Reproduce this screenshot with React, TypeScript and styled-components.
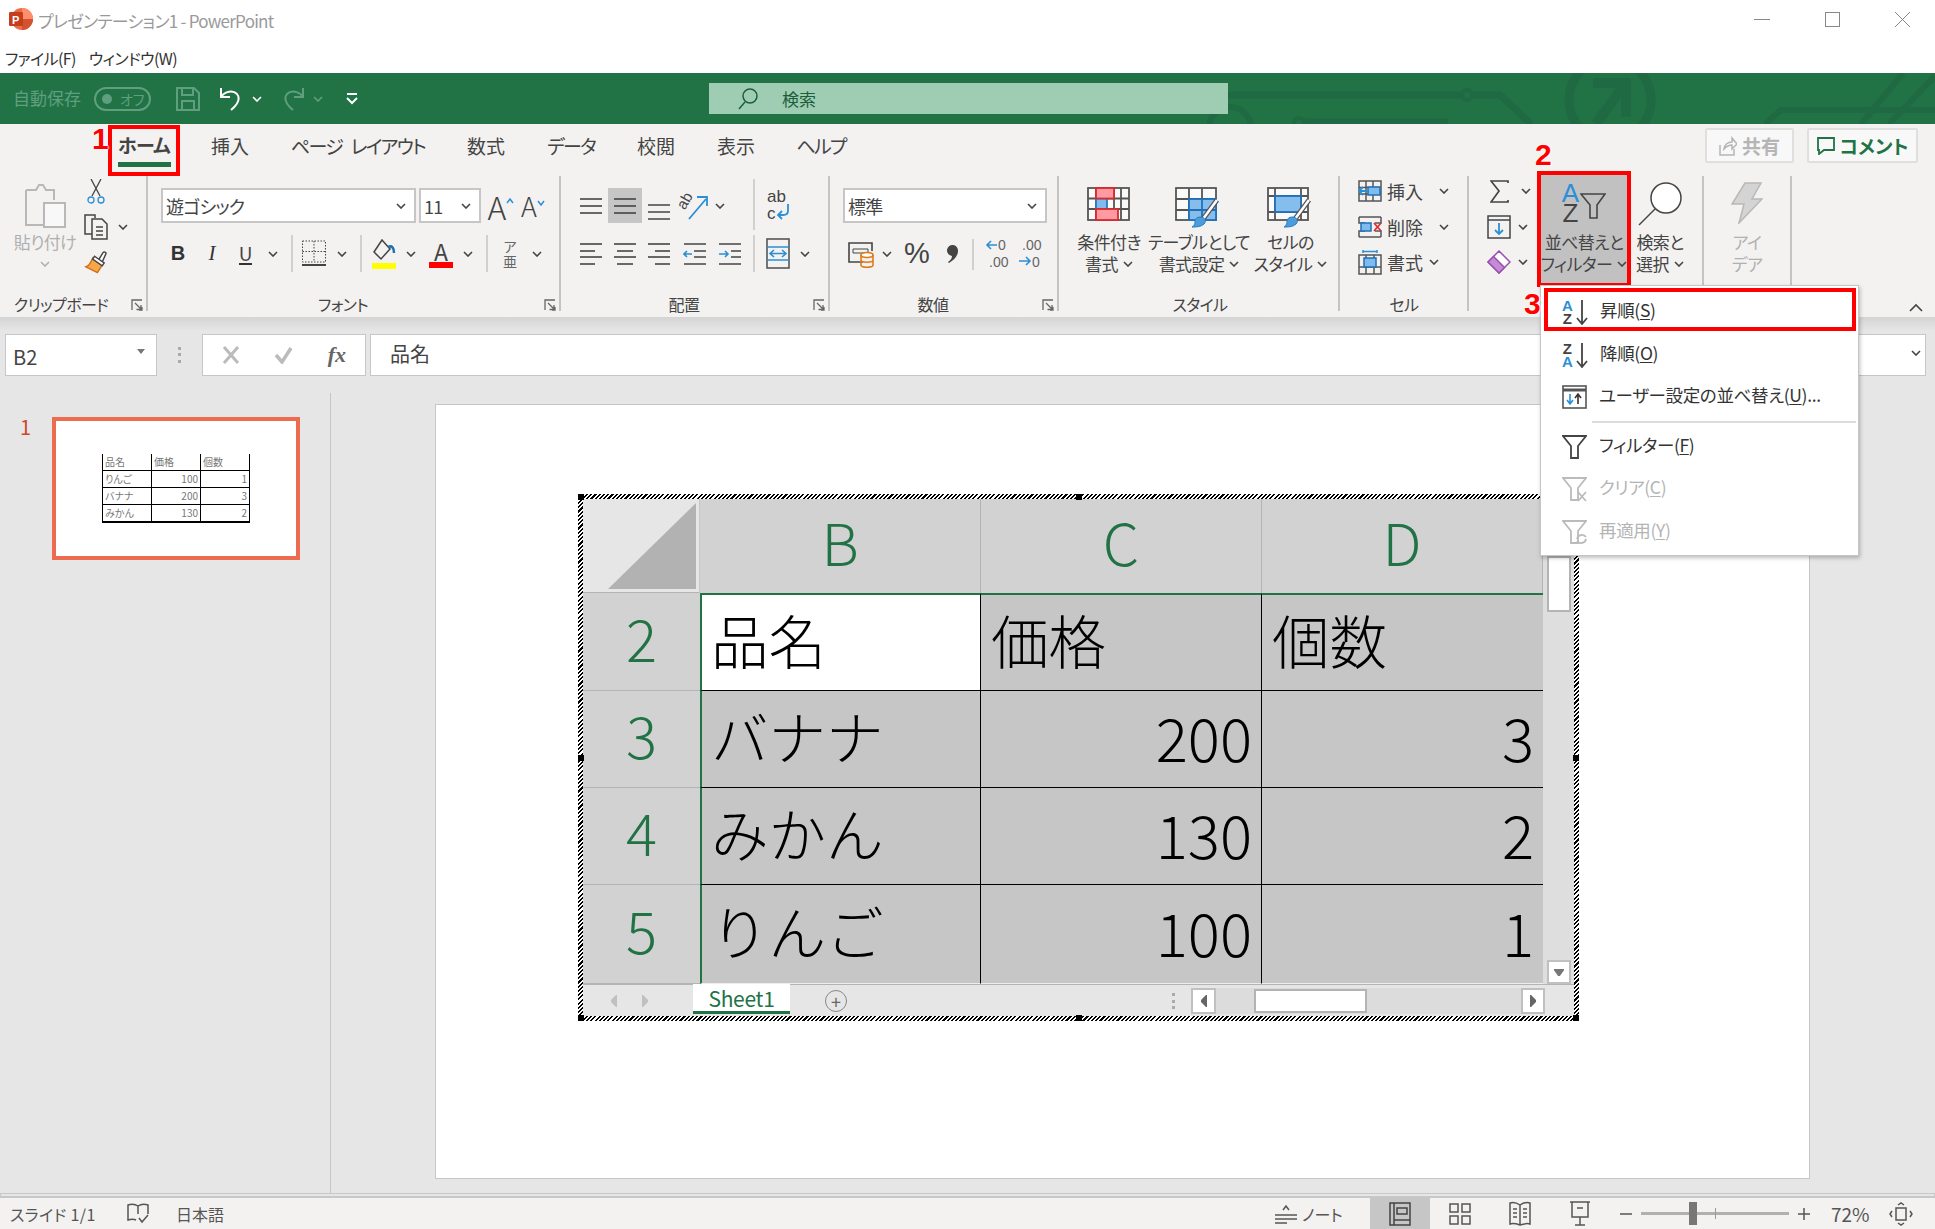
import React from 'react';
import styled, { createGlobalStyle } from 'styled-components';

const GlobalStyle = createGlobalStyle`
  html, body { margin: 0; padding: 0; background: #e6e6e6; }
  body {
    font-family: "Noto Sans CJK JP", "Liberation Sans", sans-serif;
    font-feature-settings: "palt";
    color: #444;
  }
  * { box-sizing: border-box; }
`;

const GREEN = '#217346';
const INK = '#444444';
const BLUE = '#2b8fd6';

const Window = styled.div`
  position: relative;
  width: 1935px;
  height: 1229px;
  overflow: hidden;
  display: flex;
  flex-direction: column;
  background: #e6e6e6;
`;

const TitleBar = styled.div`
  height: 38px;
  background: #fff;
  display: flex;
  align-items: center;
  padding-left: 9px;
`;

const TitleText = styled.span`
  margin-left: 5px;
  padding-top: 2px;
  font-size: 17px;
  letter-spacing: -0.75px;
  color: #9a9a9a;
  white-space: nowrap;
`;

const WinControls = styled.div`
  margin-left: auto;
  display: flex;
  align-items: center;
  padding-right: 25px;
  gap: 55px;
`;

const MenuBar = styled.div`
  height: 35px;
  background: #fff;
  display: flex;
  align-items: center;
  padding: 5px 0 0 5px;
  gap: 13px;
  font-size: 16px;
  letter-spacing: -0.6px;
  color: #333;
`;

const QuickBar = styled.div`
  position: relative;
  height: 51px;
  background: ${GREEN};
  display: flex;
  align-items: center;
  padding-left: 13px;
`;

const Pattern = styled.svg`
  position: absolute;
  left: 0;
  top: 0;
`;

const AutoSave = styled.span`
  font-size: 17px;
  padding-bottom: 3px;
  color: #5f9f7e;
  width: 71px;
  white-space: nowrap;
`;

const Toggle = styled.div`
  margin-left: 10px;
  width: 57px;
  height: 24px;
  border: 2px solid #5f9f7e;
  border-radius: 12px;
  display: flex;
  align-items: center;
  padding-left: 6px;
  gap: 8px;
  font-size: 14px;
  color: #5f9f7e;
  &::before {
    content: '';
    width: 10px;
    height: 10px;
    border-radius: 50%;
    background: #5f9f7e;
  }
`;

const Slot = styled.div<{ $w: number; $ml?: number }>`
  flex: none;
  width: ${(p) => p.$w}px;
  margin-left: ${(p) => p.$ml ?? 0}px;
  display: flex;
  justify-content: center;
  align-items: center;
`;

const SearchBox = styled.div`
  position: relative;
  margin-left: 351px;
  width: 519px;
  height: 31px;
  background: #9fcdb4;
  display: flex;
  align-items: center;
  padding-left: 29px;
  gap: 24px;
  font-size: 17px;
  color: #1d5f3b;
`;

const Ribbon = styled.div`
  height: 193px;
  background: #f3f2f1;
  display: flex;
  flex-direction: column;
  flex: none;
`;

const TabRow = styled.div`
  height: 52px;
  display: flex;
  padding-left: 108px;
`;

const HomeTab = styled.div`
  width: 72px;
  height: 51px;
  margin-top: 1px;
  border: 4px solid #f00;
  margin-right: 10px;
  display: flex;
  flex-direction: column;
  align-items: center;
  font-size: 19px;
  font-weight: 700;
  letter-spacing: -0.8px;
  color: #444;
  line-height: 32px;
  &::after {
    content: '';
    width: 53px;
    height: 5px;
    margin-top: 1px;
    background: ${GREEN};
  }
`;

const Tab = styled.div<{ $w: number; $ls?: number }>`
  width: ${(p) => p.$w}px;
  height: 42px;
  display: flex;
  justify-content: center;
  align-items: center;
  font-size: 19px;
  letter-spacing: ${(p) => p.$ls ?? 0}px;
  word-spacing: 6px;
  color: #444;
  white-space: nowrap;
`;

const ShareWrap = styled.div`
  margin-left: auto;
  margin-right: 17px;
  margin-top: 4px;
  display: flex;
  gap: 13px;
  height: 35px;
`;

const ShareButton = styled.div<{ $w: number; $off?: boolean }>`
  width: ${(p) => p.$w}px;
  border: 2px solid #e1dfdd;
  border-radius: 2px;
  background: #f8f8f8;
  display: flex;
  align-items: center;
  justify-content: center;
  gap: 5px;
  font-size: 19px;
  font-weight: 700;
  color: ${(p) => (p.$off ? '#b5b5b5' : GREEN)};
`;

const GroupRow = styled.div`
  display: flex;
  height: 141px;
`;

const Group = styled.div<{ $w: number }>`
  position: relative;
  width: ${(p) => p.$w}px;
  flex: none;
  &::after {
    content: '';
    position: absolute;
    right: 0;
    top: 0;
    width: 2px;
    height: 135px;
    background: #c4c4c4;
  }
`;

const GroupLabel = styled.div<{ $cx: number }>`
  position: absolute;
  top: 115px;
  left: ${(p) => p.$cx}px;
  transform: translateX(-50%);
  font-size: 16px;
  line-height: 26px;
  letter-spacing: -0.6px;
  color: #444;
  white-space: nowrap;
`;

const Launcher = styled.div`
  position: absolute;
  right: 5px;
  top: 123px;
  line-height: 0;
`;

const Columns = styled.div<{ $pl?: number }>`
  display: flex;
  padding-left: ${(p) => p.$pl ?? 0}px;
`;

const Stack = styled.div<{ $pl?: number }>`
  display: flex;
  flex-direction: column;
  padding: 12px 0 0 ${(p) => p.$pl ?? 0}px;
  gap: 13px;
`;

const ToolRow = styled.div<{ $pl?: number }>`
  display: flex;
  align-items: center;
  height: 35px;
  padding-left: ${(p) => p.$pl ?? 0}px;
`;

const Compact = styled.div<{ $w: number; $ml?: number }>`
  width: ${(p) => p.$w}px;
  margin-left: ${(p) => p.$ml ?? 0}px;
  flex: none;
  display: flex;
  flex-direction: column;
  gap: 5.5px;
`;

const CompactRow = styled.div<{ $pl?: number }>`
  display: flex;
  align-items: center;
  height: 30px;
  padding-left: ${(p) => p.$pl ?? 0}px;
  font-size: 18px;
  color: #444;
`;

const CompactLabel = styled.span`
  width: 35px;
  margin-left: 5px;
  white-space: nowrap;
`;

const Combo = styled.div<{ $w: number; $ml?: number }>`
  width: ${(p) => p.$w}px;
  margin-left: ${(p) => p.$ml ?? 0}px;
  height: 35px;
  flex: none;
  background: #fff;
  border: 2px solid #c6c6c6;
  display: flex;
  align-items: center;
  justify-content: space-between;
  padding: 0 8px 0 3px;
  font-size: 18px;
  letter-spacing: -0.7px;
  color: #444;
`;

const Divider = styled.div<{ $h: number; $mt?: number }>`
  width: 2px;
  height: ${(p) => p.$h}px;
  margin-top: ${(p) => p.$mt ?? 0}px;
  background: #d0d0d0;
  align-self: flex-start;
`;

const Hi = styled.div`
  width: 34px;
  height: 35px;
  background: #c6c6c6;
  display: flex;
  justify-content: center;
  align-items: center;
`;

const BigButton = styled.div<{ $w: number; $pt: number; $off?: boolean }>`
  width: ${(p) => p.$w}px;
  flex: none;
  display: flex;
  flex-direction: column;
  align-items: center;
  font-size: 17px;
  line-height: 22px;
  color: ${(p) => (p.$off ? '#b0b0b0' : '#444')};
  white-space: nowrap;
  & > :first-child {
    height: 55px;
    padding-top: ${(p) => p.$pt}px;
    line-height: 0;
  }
`;

const IconBox = styled.div``;

const LabelLine = styled.div`
  display: flex;
  align-items: center;
  gap: 5px;
  min-height: 22px;
  letter-spacing: -0.6px;
`;

const SortButton = styled.div`
  width: 94px;
  height: 116px;
  margin-top: -5px;
  flex: none;
  border: 4px solid #f00;
  background: #c1c1c1;
  display: flex;
  flex-direction: column;
  align-items: center;
  font-size: 17px;
  line-height: 22px;
  color: #444;
  white-space: nowrap;
`;

const SortIconBox = styled.div`
  height: 56px;
  padding-top: 8px;
  display: flex;
  align-items: flex-start;
  gap: 1px;
`;

const SortLetters = styled.div<{ $size: number; $lh: number }>`
  display: flex;
  flex-direction: column;
  align-items: center;
  font-family: "Liberation Sans", sans-serif;
  font-size: ${(p) => p.$size}px;
  line-height: ${(p) => p.$lh}px;
  letter-spacing: 0;
`;

const SortLetter = styled.span<{ $c: string; $b?: boolean }>`
  display: block;
  color: ${(p) => p.$c};
  font-weight: ${(p) => (p.$b ? 700 : 400)};
`;

const GlyphA = styled.span<{ $size: number }>`
  font-size: ${(p) => p.$size}px;
  line-height: 1;
  color: #444;
  font-weight: 300;
`;

const Caret = styled.span`
  align-self: flex-start;
  margin-top: 7px;
  line-height: 0;
`;

const Bold = styled.span`
  font-family: "Liberation Sans", sans-serif;
  font-weight: 700;
  font-size: 20px;
  color: #333;
`;

const Ital = styled.span`
  font-family: "Liberation Serif", serif;
  font-style: italic;
  font-size: 21px;
  color: #333;
`;

const Under = styled.span`
  font-size: 19px;
  line-height: 21px;
  border-bottom: 2px solid #333;
  color: #444;
`;

const ColorA = styled.div<{ $bar: string }>`
  width: 24px;
  display: flex;
  flex-direction: column;
  align-items: center;
  font-size: 23px;
  line-height: 22px;
  color: #444;
  &::after {
    content: '';
    width: 24px;
    height: 6px;
    background: ${(p) => p.$bar};
  }
`;

const Furi = styled.div`
  display: flex;
  flex-direction: column;
  align-items: center;
  font-size: 14px;
  line-height: 15px;
  color: #666;
  span { display: block; height: 15px; }
`;

const Percent = styled.span`
  font-family: "Liberation Sans", sans-serif;
  font-size: 29px;
  color: #444;
`;

const RibbonShade = styled.div`
  height: 14px;
  flex: none;
  background: linear-gradient(#d4d4d4, #e6e6e6);
`;

const FormulaRow = styled.div`
  height: 45px;
  flex: none;
  padding: 3px 9px 0 5px;
  display: flex;
  align-items: stretch;
`;

const NameBox = styled.div`
  width: 152px;
  background: #fff;
  border: 1px solid #c6c6c6;
  display: flex;
  align-items: center;
  justify-content: space-between;
  padding: 3px 11px 0 7px;
  font-size: 20px;
  color: #444;
  &::after {
    content: '';
    border: 4px solid transparent;
    border-top: 5px solid #777;
    margin-top: -6px;
  }
`;

const FxBox = styled.div`
  width: 164px;
  background: #fff;
  border: 1px solid #c6c6c6;
  display: flex;
  align-items: center;
  justify-content: space-between;
  padding: 0 19px;
`;

const FormulaInput = styled.div`
  flex: 1;
  margin-left: 4px;
  background: #fff;
  border: 1px solid #c6c6c6;
  display: flex;
  align-items: center;
  justify-content: space-between;
  padding: 0 4px 4px 19px;
  font-size: 20px;
  color: #444;
`;

const FxText = styled.span`
  font-family: "Liberation Serif", serif;
  font-style: italic;
  font-weight: 700;
  font-size: 22px;
  color: #666;
`;

const Main = styled.div`
  flex: 1;
  display: flex;
  min-height: 0;
`;

const SidePanel = styled.div`
  width: 331px;
  flex: none;
  margin-top: 17px;
  border-right: 1px solid #c6c6c6;
  padding: 24px 0 0 20px;
  display: flex;
  align-items: flex-start;
`;

const SlideNum = styled.div`
  width: 32px;
  font-size: 20px;
  line-height: 20px;
  color: #d24726;
`;

const Thumb = styled.div`
  width: 248px;
  height: 143px;
  background: #fff;
  border: 4px solid #ed6c4f;
  display: flex;
  align-items: center;
  justify-content: center;
`;

const MiniTable = styled.div`
  width: 148px;
  display: grid;
  grid-template-columns: 49px 49px 49px;
  border-left: 1px solid #000;
  border-bottom: 1px solid #000;
`;

const MiniCell = styled.div<{ $num?: boolean }>`
  height: 17px;
  border-right: 1px solid #000;
  border-bottom: 1px solid #000;
  font-size: 10px;
  line-height: 16px;
  padding: 0 2px;
  color: #777;
  text-align: ${(p) => (p.$num ? 'right' : 'left')};
`;

const SlideArea = styled.div`
  flex: 1;
  padding: 28px 0 0 104px;
`;

const Slide = styled.div`
  position: relative;
  width: 1375px;
  height: 775px;
  background: #fff;
  border: 1px solid #c6c6c6;
  padding: 89px 0 0 142px;
`;

const Embedded = styled.div`
  position: relative;
  width: 1001px;
  height: 527px;
  padding: 5px;
  background: repeating-linear-gradient(135deg, #000 0 1.5px, #fff 1.5px 3px);
`;

const Handle = styled.i<{ $x: string; $y: string }>`
  position: absolute;
  left: ${(p) => p.$x};
  top: ${(p) => p.$y};
  width: 6px;
  height: 6px;
  margin: -3px 0 0 -3px;
  background: #000;
`;

const Sheet = styled.div`
  height: 517px;
  display: flex;
  flex-direction: column;
  background: #e6e6e6;
`;

const SheetGrid = styled.div`
  height: 485px;
  display: grid;
  grid-template-columns: 117px 281px 281px 281px 31px;
  grid-template-rows: 94px 98px 97px 97px 99px;
`;

const Corner = styled.div`
  background: #e6e6e6;
  display: flex;
  justify-content: flex-end;
  align-items: flex-end;
  padding: 0 3px 3px 0;
  border-bottom: 1px solid #b4b4b4;
  border-right: 1px solid #c6c6c6;
  &::after {
    content: '';
    width: 88px;
    height: 86px;
    background: #b2b2b2;
    clip-path: polygon(100% 0, 100% 100%, 0 100%);
  }
`;

const ColHead = styled.div`
  background: #d2d2d2;
  border-right: 1px solid #b4b4b4;
  display: flex;
  justify-content: center;
  align-items: center;
  padding-bottom: 10px;
  font-size: 58px;
  font-weight: 300;
  color: ${GREEN};
`;

const RowHead = styled.div`
  background: #d2d2d2;
  border-bottom: 1px solid #b4b4b4;
  display: flex;
  justify-content: center;
  align-items: center;
  padding-bottom: 10px;
  font-size: 58px;
  font-weight: 300;
  color: ${GREEN};
`;

const Cell = styled.div<{ $sel?: boolean; $num?: boolean; $left?: boolean; $top?: boolean; $last?: boolean; $end?: boolean }>`
  background: ${(p) => (p.$sel ? '#fff' : '#c6c6c6')};
  border-bottom: 1px solid ${(p) => (p.$end ? '#ededed' : '#000')};
  border-right: ${(p) => (p.$last ? 'none' : '1px solid #000')};
  border-left: ${(p) => (p.$left ? `2px solid ${GREEN}` : 'none')};
  border-top: ${(p) => (p.$top ? `2px solid ${GREEN}` : 'none')};
  display: flex;
  align-items: center;
  justify-content: ${(p) => (p.$num ? 'flex-end' : 'flex-start')};
  padding: 0 ${(p) => (p.$num ? 9 : 0)}px 8px ${(p) => (p.$num ? 0 : p.$left ? 9 : 10)}px;
  font-size: ${(p) => (p.$num ? 60 : 57.5)}px;
  font-weight: 300;
  font-feature-settings: normal;
  color: #000;
  white-space: nowrap;
`;

const VScroll = styled.div`
  grid-column: 5;
  grid-row: 1 / 6;
  background: #dedede;
  display: flex;
  flex-direction: column;
  align-items: center;
  padding: 57px 0 0;
`;

const ScrollThumb = styled.div`
  width: 24px;
  height: 56px;
  background: #fff;
  border: 2px solid #b4b4b4;
`;

const ScrollBtn = styled.div<{ $w: number; $h: number; $auto?: boolean }>`
  width: ${(p) => p.$w}px;
  height: ${(p) => p.$h}px;
  flex: none;
  margin-top: ${(p) => (p.$auto ? 'auto' : 0)};
  background: #fff;
  border: 2px solid #c0c0c0;
  display: flex;
  align-items: center;
  justify-content: center;
`;

const SheetTabs = styled.div`
  height: 32px;
  display: flex;
  align-items: center;
  border-top: 1px solid #b4b4b4;
  padding-left: 15px;
`;

const SheetTab = styled.div`
  width: 97px;
  height: 30px;
  margin-top: -3px;
  flex: none;
  background: #fff;
  border-bottom: 3px solid ${GREEN};
  display: flex;
  align-items: center;
  justify-content: center;
  font-size: 21px;
  letter-spacing: -0.3px;
  color: ${GREEN};
`;

const PlusCircle = styled.div`
  width: 22px;
  height: 22px;
  border: 1px solid #888;
  border-radius: 50%;
  display: flex;
  align-items: center;
  justify-content: center;
  font-size: 18px;
  line-height: 1;
  color: #666;
`;

const Dots = styled.div`
  width: 3px;
  height: 16px;
  background: repeating-linear-gradient(#aaa 0 3px, transparent 3px 6.5px);
`;

const HScroll = styled.div`
  width: 354px;
  margin-left: 10px;
  height: 26px;
  flex: none;
  background: #dcdcdc;
  display: flex;
  align-items: center;
`;

const HTrack = styled.div`
  flex: 1;
  padding-left: 38px;
`;

const HThumb = styled.div`
  width: 113px;
  height: 24px;
  background: #fff;
  border: 2px solid #b4b4b4;
`;

const StatusBar = styled.div`
  height: 33px;
  flex: none;
  background: #f3f2f1;
  border-top: 2px solid #c8c8c8;
  box-shadow: 0 -3px 0 -1px #e6e6e6, 0 -3px 0 0 #c8c8c8;
  display: flex;
  align-items: center;
  padding-left: 10px;
  font-size: 16px;
  color: #555;
`;

const StatusText = styled.span<{ $w: number; $ml?: number; $fs?: number; $ls?: number }>`
  flex: none;
  width: ${(p) => p.$w}px;
  margin-left: ${(p) => p.$ml ?? 0}px;
  font-size: ${(p) => p.$fs ?? 16}px;
  letter-spacing: ${(p) => p.$ls ?? 0}px;
  white-space: nowrap;
`;

const StatusRight = styled.div`
  margin-left: auto;
  padding-right: 22px;
  height: 100%;
  display: flex;
  align-items: center;
`;

const ViewBtn = styled.div<{ $w: number; $on?: boolean }>`
  width: ${(p) => p.$w}px;
  height: 100%;
  flex: none;
  background: ${(p) => (p.$on ? '#c6c6c6' : 'transparent')};
  display: flex;
  align-items: center;
  justify-content: center;
`;

const ZoomSlider = styled.div`
  position: relative;
  width: 148px;
  height: 3px;
  flex: none;
  background: #b0b0b0;
`;

const ZoomKnob = styled.div`
  position: absolute;
  left: 48px;
  top: -10px;
  width: 8px;
  height: 23px;
  background: #777;
`;

const ZoomTick = styled.div`
  position: absolute;
  left: 74px;
  top: -4px;
  width: 1px;
  height: 11px;
  background: #999;
`;

const Menu = styled.div`
  position: absolute;
  left: 1540px;
  top: 285px;
  width: 319px;
  height: 271px;
  background: #fff;
  border: 1px solid #c6c6c6;
  box-shadow: 1px 2px 4px rgba(0, 0, 0, 0.25);
  padding-top: 5px;
`;

const MenuItem = styled.div<{ $off?: boolean }>`
  height: 42.5px;
  display: flex;
  align-items: center;
  padding-left: 21px;
  gap: 12px;
  font-size: 17.5px;
  letter-spacing: -0.35px;
  color: ${(p) => (p.$off ? '#b4b4b4' : '#333')};
  white-space: nowrap;
  & > span { margin-top: -5px; }
  u { text-underline-offset: 2px; }
`;

const MenuSortIcon = styled.div`
  width: 26px;
  flex: none;
  display: flex;
  align-items: center;
  gap: 3px;
`;

const MenuSep = styled.div`
  height: 2px;
  margin: 2px 2px 3px 51px;
  background: #dcdcdc;
`;

const MenuMark = styled.div`
  position: absolute;
  left: 3px;
  top: 2px;
  width: 312px;
  height: 43px;
  border: 4px solid #f00;
`;

const StepNumber = styled.div<{ $x: number; $y: number }>`
  position: absolute;
  left: ${(p) => p.$x}px;
  top: ${(p) => p.$y}px;
  font-family: "Liberation Sans", sans-serif;
  font-weight: 700;
  font-size: 30px;
  line-height: 30px;
  color: #f00;
  text-shadow: 0 0 2px #fff, 0 0 2px #fff, 0 0 2px #fff;
`;

const Collapse = styled.svg`
  position: absolute;
  left: 1908px;
  top: 303px;
`;

type IcoProps = { w: number; h: number; c?: string; sw?: number; children: React.ReactNode };

const Ico = ({ w, h, c = INK, sw = 1.5, children }: IcoProps) => (
  <svg width={w} height={h} viewBox={`0 0 ${w} ${h}`} fill="none" stroke={c} strokeWidth={sw}>
    {children}
  </svg>
);

const Chev = ({ c = '#444' }: { c?: string }) => (
  <Ico w={10} h={6} c={c} sw={1.6}>
    <path d="M1 1l4 4 4-4" />
  </Ico>
);

const LauncherIcon = () => (
  <Launcher>
    <Ico w={12} h={12} c="#666" sw={1.3}>
      <path d="M1 11V1h10M4 4l6 6M10 6v4.5H5.5M11 8v3H8" />
    </Ico>
  </Launcher>
);

const Lines = ({ ys, xs }: { ys: number[]; xs: [number, number][] }) => (
  <Ico w={24} h={24} sw={1.6}>
    {ys.map((y, i) => (
      <path key={y} d={`M${xs[i % xs.length][0]} ${y}H${xs[i % xs.length][1]}`} />
    ))}
  </Ico>
);

const full: [number, number][] = [[1, 23]];

const SortAZIcon = ({ rev }: { rev?: boolean }) => (
  <MenuSortIcon>
    <SortLetters $size={15} $lh={13}>
      <SortLetter $c={rev ? INK : BLUE} $b>{rev ? 'Z' : 'A'}</SortLetter>
      <SortLetter $c={rev ? BLUE : INK} $b>{rev ? 'A' : 'Z'}</SortLetter>
    </SortLetters>
    <Ico w={12} h={26} sw={1.8}>
      <path d="M6 1v24M1 19l5 6 5-6" />
    </Ico>
  </MenuSortIcon>
);

const FunnelIcon = ({ c = INK, children }: { c?: string; children?: React.ReactNode }) => (
  <Ico w={25} h={26} c={c} sw={1.8}>
    <path d="M1 2h23l-8 10v12h-7V12z" />
    {children}
  </Ico>
);

const TableGrid = ({ children }: { children: React.ReactNode }) => (
  <svg width="48" height="42" viewBox="0 0 48 42" fill="none" stroke="#555" strokeWidth="1.8">
    {children}
  </svg>
);

const Brush = () => (
  <g>
    <path d="M42 13L28 32" stroke="#555" strokeWidth="5" />
    <path d="M42 13L28 32" stroke="#fff" strokeWidth="2.5" />
    <path d="M25 30c5 0 7 4 4 7-3 3-8 3-12 3 3-2 3-4 3-6s2-4 5-4z" fill="#4a9cdc" stroke="#2b7cc0" strokeWidth="1" />
  </g>
);

const CondIcon = () => (
  <svg width="44" height="34" viewBox="0 0 44 34" fill="#fafafa" stroke="#555" strokeWidth="1.8">
    <rect x="1" y="1" width="41" height="32" />
    <path d="M1 11.5h41M1 22h41M9 1v32M27 1v32M34 1v32" fill="none" />
    <rect x="9" y="11.5" width="11" height="10.5" fill="#7fbbec" stroke="#2b7cc0" />
    <rect x="9" y="1" width="18" height="10.5" fill="#ff9aa5" stroke="#d92b2b" />
    <rect x="9" y="22" width="22" height="11" fill="#ff9aa5" stroke="#d92b2b" />
  </svg>
);

const TableIcon = () => (
  <TableGrid>
    <rect x="1" y="1" width="40" height="32" fill="#fafafa" />
    <path d="M1 12h40M1 23h40M14 1v32M27 1v32" />
    <rect x="14" y="12" width="27" height="21" fill="#85bdec" stroke="#2170b8" />
    <path d="M27 12v21M14 23h27" stroke="#2170b8" />
    <Brush />
  </TableGrid>
);

const CellStyleIcon = () => (
  <TableGrid>
    <rect x="1" y="1" width="40" height="32" fill="#fafafa" />
    <path d="M1 9h40M1 25h40M8 1v32M34 1v32" />
    <rect x="8" y="9" width="26" height="16" fill="#85bdec" stroke="#2170b8" />
    <Brush />
  </TableGrid>
);

const App = () => (
  <>
    <GlobalStyle />
    <Window>
      <TitleBar>
        <svg width="24" height="22" viewBox="0 0 24 22">
          <circle cx="13" cy="11" r="11" fill="#ed6c47" />
          <path d="M13 0a11 11 0 0 1 11 11H13z" fill="#ff8f6b" />
          <path d="M13 11h11a11 11 0 0 1-11 11z" fill="#d35230" />
          <rect x="0" y="4" width="14" height="14" rx="1" fill="#c43e1c" />
          <text x="3" y="15.5" fontSize="11" fontWeight="700" fontFamily="Liberation Sans" fill="#fff">P</text>
        </svg>
        <TitleText>プレゼンテーション1 - PowerPoint</TitleText>
        <WinControls>
          <Ico w={16} h={15} c="#888" sw={1}>
            <path d="M0 7.5h16" />
          </Ico>
          <Ico w={15} h={15} c="#888" sw={1}>
            <rect x="0.5" y="0.5" width="14" height="14" />
          </Ico>
          <Ico w={15} h={15} c="#888" sw={1}>
            <path d="M0 0l15 15M15 0L0 15" />
          </Ico>
        </WinControls>
      </TitleBar>

      <MenuBar>
        <span>ファイル(F)</span>
        <span>ウィンドウ(W)</span>
      </MenuBar>

      <QuickBar>
        <Pattern width="1935" height="51" viewBox="0 0 1935 51" fill="none" stroke="#1f6a42">
          <path d="M1227 22H1500L1531 51" strokeWidth="7" />
          <circle cx="1467" cy="22" r="5" strokeWidth="4" fill="#217346" />
          <path d="M1299 49H1448" strokeWidth="7" />
          <circle cx="1299" cy="50" r="5" strokeWidth="4" fill="#217346" />
          <circle cx="1230" cy="55" r="21" strokeWidth="6" />
          <circle cx="1610" cy="27" r="41" strokeWidth="9" />
          <path d="M1593 10H1626V44M1624 12L1596 51" strokeWidth="10" />
          <path d="M1765 51L1781 37H1935M1903 0L1861 51M1935 3L1889 51" strokeWidth="6" />
        </Pattern>
        <AutoSave>自動保存</AutoSave>
        <Toggle>オフ</Toggle>
        <Slot $w={24} $ml={25}>
          <Ico w={24} h={24} c="#5f9f7e" sw={2}>
            <path d="M1 1h17l5 5v17H1zM6 1v7h11V1M6 23v-9h12v9" />
          </Ico>
        </Slot>
        <Slot $w={24} $ml={19}>
          <Ico w={24} h={24} c="#fff" sw={2}>
            <path d="M2 1v9h9M2 10C6 4 14 3 18 7c4 5 1 10-6 16" />
          </Ico>
        </Slot>
        <Slot $w={28}>
          <Chev c="#fff" />
        </Slot>
        <Slot $w={24} $ml={10}>
          <Ico w={24} h={24} c="#5f9f7e" sw={2}>
            <path d="M22 1v9h-9M22 10C18 4 10 3 6 7c-4 5-1 10 6 16" />
          </Ico>
        </Slot>
        <Slot $w={26}>
          <Chev c="#5f9f7e" />
        </Slot>
        <Slot $w={12} $ml={15}>
          <Ico w={12} h={13} c="#fff" sw={2}>
            <path d="M1 2h10M1 6l5 5 5-5" />
          </Ico>
        </Slot>
        <SearchBox>
          <Ico w={20} h={22} c="#1d5f3b" sw={1.5}>
            <circle cx="12" cy="8" r="7" />
            <path d="M7 14L1 21" />
          </Ico>
          <span>検索</span>
        </SearchBox>
      </QuickBar>

      <Ribbon>
        <TabRow>
          <HomeTab>ホーム</HomeTab>
          <Tab $w={80}>挿入</Tab>
          <Tab $w={176} $ls={-1.7}>ページ レイアウト</Tab>
          <Tab $w={80}>数式</Tab>
          <Tab $w={90} $ls={-1.8}>データ</Tab>
          <Tab $w={80}>校閲</Tab>
          <Tab $w={80}>表示</Tab>
          <Tab $w={90} $ls={-1.8}>ヘルプ</Tab>
          <ShareWrap>
            <ShareButton $w={89} $off>
              <Ico w={18} h={20} c="#b5b5b5">
                <path d="M1 9v10h14v-6M5 13c1-5 4-7 8-7V2l5 6-5 5V9c-4 0-6 2-8 4z" />
              </Ico>
              共有
            </ShareButton>
            <ShareButton $w={111}>
              <Ico w={18} h={18} c={GREEN} sw={1.8}>
                <path d="M1 1h16v12H7l-5 4v-4H1z" />
              </Ico>
              コメント
            </ShareButton>
          </ShareWrap>
        </TabRow>

        <GroupRow>
          <Group $w={148}>
            <Columns>
              <BigButton $w={90} $pt={6} $off>
                <IconBox>
                  <Ico w={42} h={46} c="#b8b8b8" sw={2}>
                    <path d="M2 8h10l3-5h4l3 5h8v10M2 8v35h17" />
                    <rect x="20" y="21" width="21" height="24" fill="#f8f8f8" />
                  </Ico>
                </IconBox>
                <LabelLine>貼り付け</LabelLine>
                <LabelLine>
                  <Chev c="#b0b0b0" />
                </LabelLine>
              </BigButton>
              <Compact $w={64} $ml={-6}>
                <CompactRow>
                  <Slot $w={24}>
                    <Ico w={18} h={25} c="#444" sw={1.3}>
                      <path d="M4 0l9 17M14 0L5 17" />
                      <circle cx="4" cy="21" r="3" stroke={BLUE} />
                      <circle cx="14" cy="21" r="3" stroke={BLUE} />
                    </Ico>
                  </Slot>
                </CompactRow>
                <CompactRow>
                  <Slot $w={24}>
                    <Ico w={24} h={26} sw={1.5}>
                      <path d="M8 20H1V1h10v3M8 5h10l5 5v15H8zM12 13h7M12 17h7M12 21h7" />
                    </Ico>
                  </Slot>
                  <Slot $w={30}><Chev /></Slot>
                </CompactRow>
                <CompactRow>
                  <Slot $w={24}>
                    <Ico w={25} h={24} c="#444" sw={1.5}>
                      <path d="M15 10l5-8c1-1 3 0 3 1l-4 9" fill="#fff" />
                      <path d="M9 8l10 7-5 8-12-6c3-1 5-4 7-9z" fill="#f7a648" stroke="#d0701a" />
                      <path d="M11 6l10 7-2 3-10-7z" fill="#fff" />
                    </Ico>
                  </Slot>
                </CompactRow>
              </Compact>
            </Columns>
            <GroupLabel $cx={61}>クリップボード</GroupLabel>
            <LauncherIcon />
          </Group>

          <Group $w={413}>
            <Stack>
              <ToolRow $pl={13}>
                <Combo $w={255}>
                  遊ゴシック
                  <Chev />
                </Combo>
                <Combo $w={62} $ml={3}>
                  11
                  <Chev />
                </Combo>
                <Slot $w={30} $ml={5}>
                  <GlyphA $size={32}>A</GlyphA>
                  <Caret>
                    <Ico w={8} h={6} c="#2b8fd6">
                      <path d="M1 5l3-4 3 4" />
                    </Ico>
                  </Caret>
                </Slot>
                <Slot $w={34}>
                  <GlyphA $size={27}>A</GlyphA>
                  <Caret>
                    <Ico w={8} h={6} c="#2b8fd6">
                      <path d="M1 1l3 4 3-4" />
                    </Ico>
                  </Caret>
                </Slot>
              </ToolRow>
              <ToolRow $pl={13}>
                <Slot $w={34}><Bold>B</Bold></Slot>
                <Slot $w={34}><Ital>I</Ital></Slot>
                <Slot $w={33}><Under>U</Under></Slot>
                <Slot $w={22}><Chev /></Slot>
                <Slot $w={16}><Divider $h={37} /></Slot>
                <Slot $w={28}>
                  <Ico w={24} h={27} c="#444" sw={1}>
                    <path d="M.5 1h23v21H.5zM12 1v21M.5 11.5h23" strokeDasharray="1.5 1.5" />
                    <path d="M0 25h24" strokeWidth="2" />
                  </Ico>
                </Slot>
                <Slot $w={28}><Chev /></Slot>
                <Slot $w={10}><Divider $h={37} /></Slot>
                <Slot $w={36}>
                  <Ico w={24} h={30} c="#444" sw={1.5}>
                    <path d="M10 1L2 13l7 7 9-10z" />
                    <path d="M16 8c4-2 6 1 6 6" stroke="#1e70b8" strokeWidth="2.5" />
                    <path d="M0 27h24" stroke="#ffff00" strokeWidth="6" />
                  </Ico>
                </Slot>
                <Slot $w={18}><Chev /></Slot>
                <Slot $w={42}><ColorA $bar="#ff0000">A</ColorA></Slot>
                <Slot $w={12}><Chev /></Slot>
                <Slot $w={26}><Divider $h={37} /></Slot>
                <Slot $w={20}>
                  <Furi>
                    <span>ア</span>
                    <span>亜</span>
                  </Furi>
                </Slot>
                <Slot $w={34}><Chev /></Slot>
              </ToolRow>
            </Stack>
            <GroupLabel $cx={195}>フォント</GroupLabel>
            <LauncherIcon />
          </Group>

          <Group $w={269}>
            <Stack $pl={12}>
              <ToolRow>
                <Slot $w={35}><Lines ys={[5, 12, 19]} xs={full} /></Slot>
                <Hi><Lines ys={[5, 12, 19]} xs={full} /></Hi>
                <Slot $w={34}>
                  <Ico w={24} h={32} sw={1.6}>
                    <path d="M1 15h22M1 22h22M1 29h22" />
                  </Ico>
                </Slot>
                <Slot $w={38}>
                  <svg width="28" height="30" viewBox="0 0 28 30" fill="none" overflow="visible">
                    <text x="0" y="17" fontSize="15" fontFamily="Liberation Sans" transform="rotate(-60 4 15)" fill="#444">ab</text>
                    <path d="M8 28L25 8M16 6h10v9" stroke={BLUE} strokeWidth="1.8" />
                  </svg>
                </Slot>
                <Slot $w={12}><Chev /></Slot>
                <Slot $w={24} />
                <Slot $w={8}><Divider $h={51} $mt={-3} /></Slot>
                <Slot $w={42}>
                  <svg width="26" height="36" viewBox="0 0 26 36" fill="none">
                    <text x="1" y="14" fontSize="17" fontFamily="Liberation Sans" fill="#444">ab</text>
                    <text x="1" y="31" fontSize="17" fontFamily="Liberation Sans" fill="#444">c</text>
                    <path d="M22 16v7c0 3-2 4-5 4h-5m4-4l-4 4 4 4" stroke={BLUE} strokeWidth="1.8" />
                  </svg>
                </Slot>
              </ToolRow>
              <ToolRow>
                <Slot $w={35}><Lines ys={[2, 9, 15, 22]} xs={[[1, 23], [1, 16]]} /></Slot>
                <Slot $w={34}><Lines ys={[2, 9, 15, 22]} xs={[[1, 23], [4, 20]]} /></Slot>
                <Slot $w={34}><Lines ys={[2, 9, 15, 22]} xs={[[1, 23], [8, 23]]} /></Slot>
                <Slot $w={38}>
                  <Ico w={24} h={24} sw={1.6}>
                    <path d="M1 2h22M11 9h12M11 15h12M1 22h22" />
                    <path d="M9 12H1m3-3l-3 3 3 3" stroke={BLUE} />
                  </Ico>
                </Slot>
                <Slot $w={32}>
                  <Ico w={24} h={24} sw={1.6}>
                    <path d="M1 2h22M13 9h10M13 15h10M1 22h22" />
                    <path d="M1 12h9m-3-3l3 3-3 3" stroke={BLUE} />
                  </Ico>
                </Slot>
                <Slot $w={16}><Divider $h={37} /></Slot>
                <Slot $w={32}>
                  <Ico w={24} h={31} c="#555" sw={1.6}>
                    <rect x="1" y="1" width="22" height="29" />
                    <path d="M1 9h22M1 22h22" stroke={BLUE} />
                    <path d="M4 15.5h16M8 12l-4 3.5L8 19M16 12l4 3.5-4 3.5" stroke={BLUE} />
                  </Ico>
                </Slot>
                <Slot $w={22}><Chev /></Slot>
              </ToolRow>
            </Stack>
            <GroupLabel $cx={123}>配置</GroupLabel>
            <LauncherIcon />
          </Group>

          <Group $w={229}>
            <Stack>
              <ToolRow $pl={13}>
                <Combo $w={204}>
                  標準
                  <Chev />
                </Combo>
              </ToolRow>
              <ToolRow $pl={13}>
                <Slot $w={35}>
                  <Ico w={26} h={28} sw={1.6}>
                    <path d="M15 22H1V3h23v8" />
                    <path d="M5 9h15v4H5z" strokeWidth="1" />
                    <ellipse cx="19" cy="15" rx="6" ry="2.5" stroke="#e07b1a" fill="#fff" />
                    <path d="M13 15v10c0 3 12 3 12 0V15M13 20c0 3 12 3 12 0" stroke="#e07b1a" />
                  </Ico>
                </Slot>
                <Slot $w={18}><Chev /></Slot>
                <Slot $w={42}><Percent>%</Percent></Slot>
                <Slot $w={28}>
                  <svg width="13" height="19" viewBox="0 0 13 19">
                    <path d="M1 6a5.5 5.5 0 1 1 11 1c0 5-4 9-9 12l-1-1c3-2 4-4 4-6a5.5 5.5 0 0 1-5-6z" fill="#444" />
                  </svg>
                </Slot>
                <Slot $w={14}><Divider $h={31} $mt={2} /></Slot>
                <Slot $w={34}>
                  <svg width="30" height="34" viewBox="0 0 30 34" fill="none">
                    <text x="16" y="13" fontSize="14" fontFamily="Liberation Sans" fill="#666">0</text>
                    <text x="7" y="30" fontSize="14" fontFamily="Liberation Sans" fill="#666">.00</text>
                    <path d="M15 8H5m4-4L5 8l4 4" stroke={BLUE} strokeWidth="1.6" />
                  </svg>
                </Slot>
                <Slot $w={32}>
                  <svg width="30" height="34" viewBox="0 0 30 34" fill="none">
                    <text x="7" y="13" fontSize="14" fontFamily="Liberation Sans" fill="#666">.00</text>
                    <text x="17" y="30" fontSize="14" fontFamily="Liberation Sans" fill="#666">0</text>
                    <path d="M4 24h11m-4-4l4 4-4 4" stroke={BLUE} strokeWidth="1.6" />
                  </svg>
                </Slot>
              </ToolRow>
            </Stack>
            <GroupLabel $cx={103}>数値</GroupLabel>
            <LauncherIcon />
          </Group>

          <Group $w={281}>
            <Columns $pl={4}>
              <BigButton $w={92} $pt={11}>
                <IconBox><CondIcon /></IconBox>
                <LabelLine>条件付き</LabelLine>
                <LabelLine>書式<Chev /></LabelLine>
              </BigButton>
              <BigButton $w={88} $pt={11}>
                <IconBox><TableIcon /></IconBox>
                <LabelLine>テーブルとして</LabelLine>
                <LabelLine>書式設定<Chev /></LabelLine>
              </BigButton>
              <BigButton $w={95} $pt={11}>
                <IconBox><CellStyleIcon /></IconBox>
                <LabelLine>セルの</LabelLine>
                <LabelLine>スタイル<Chev /></LabelLine>
              </BigButton>
            </Columns>
            <GroupLabel $cx={141}>スタイル</GroupLabel>
          </Group>

          <Group $w={129}>
            <Compact $w={129}>
              <CompactRow $pl={18}>
                <Ico w={24} h={22} c="#555">
                  <rect x="1" y="1" width="22" height="20" />
                  <path d="M1 7.5h22M1 14h22M8 1v20M15 1v20" />
                  <rect x="10" y="7" width="12" height="8" fill="#7fbbec" stroke="#2170b8" />
                  <path d="M10 11H1m4-4l-4 4 4 4" stroke={BLUE} strokeWidth="1.8" />
                </Ico>
                <CompactLabel>挿入</CompactLabel>
                <Slot $w={44}><Chev /></Slot>
              </CompactRow>
              <CompactRow $pl={18}>
                <Ico w={24} h={22} c="#555">
                  <path d="M1 1h22M1 21h22M1 1v6h6M23 1v6h-6M1 21v-6h6M23 21v-6h-6" />
                  <rect x="3" y="7" width="10" height="8" fill="#7fbbec" stroke="#2170b8" />
                  <path d="M16 7l7 8M23 7l-7 8" stroke="#e03030" strokeWidth="1.8" />
                </Ico>
                <CompactLabel>削除</CompactLabel>
                <Slot $w={44}><Chev /></Slot>
              </CompactRow>
              <CompactRow $pl={18}>
                <Ico w={24} h={26} c="#555">
                  <rect x="1" y="6" width="22" height="19" />
                  <path d="M1 18h22M8 6v19M16 6v19" />
                  <rect x="6" y="9" width="12" height="9" fill="#7fbbec" stroke="#2170b8" />
                  <path d="M5 1v3M19 1v3M5 2.5h14" stroke={BLUE} />
                </Ico>
                <CompactLabel>書式</CompactLabel>
                <Slot $w={24}><Chev /></Slot>
              </CompactRow>
            </Compact>
            <GroupLabel $cx={64}>セル</GroupLabel>
          </Group>

          <Group $w={235}>
            <Columns>
              <Compact $w={68}>
                <CompactRow $pl={11}>
                  <Slot $w={38}>
                    <Ico w={19} h={23} sw={1.7}>
                      <path d="M18 3V1H1l8 10-8 11h17v-2" />
                    </Ico>
                  </Slot>
                  <Slot $w={16}><Chev /></Slot>
                </CompactRow>
                <CompactRow $pl={11}>
                  <Slot $w={38}>
                    <Ico w={24} h={24} c="#444">
                      <rect x="1" y="1" width="22" height="22" />
                      <path d="M1 5h22" />
                      <path d="M12 8v11M8 15l4 4 4-4" stroke={BLUE} strokeWidth="1.8" />
                    </Ico>
                  </Slot>
                  <Slot $w={10}><Chev /></Slot>
                </CompactRow>
                <CompactRow $pl={11}>
                  <Slot $w={38}>
                    <Ico w={24} h={24} c="#9b4fb0">
                      <path d="M12 1l11 11-11 11L1 12z" fill="#fff" />
                      <path d="M6.5 6.5L17.5 17.5 12 23 1 12z" fill="#c48bd6" />
                    </Ico>
                  </Slot>
                  <Slot $w={10}><Chev /></Slot>
                </CompactRow>
              </Compact>
              <SortButton>
                <SortIconBox>
                  <SortLetters $size={26} $lh={20}>
                    <SortLetter $c={BLUE}>A</SortLetter>
                    <SortLetter $c={INK}>Z</SortLetter>
                  </SortLetters>
                  <Ico w={26} h={38} sw={1.6}>
                    <path d="M1 11h24l-8 11v13h-7V22z" />
                  </Ico>
                </SortIconBox>
                <LabelLine>並べ替えと</LabelLine>
                <LabelLine>フィルター<Chev /></LabelLine>
              </SortButton>
              <BigButton $w={58} $pt={6}>
                <IconBox>
                  <Ico w={44} h={44} c="#444">
                    <circle cx="28" cy="16" r="15" fill="#fff" />
                    <path d="M17 27L1 43" />
                  </Ico>
                </IconBox>
                <LabelLine>検索と</LabelLine>
                <LabelLine>選択<Chev /></LabelLine>
              </BigButton>
            </Columns>
          </Group>

          <Group $w={88}>
            <Columns>
              <BigButton $w={86} $pt={6} $off>
                <IconBox>
                  <svg width="32" height="42" viewBox="0 0 32 42" fill="#d4d4d4" stroke="#b8b8b8" strokeWidth="1.5">
                    <path d="M14 1h16L21 17h10L8 41l5-19H1z" />
                  </svg>
                </IconBox>
                <LabelLine>アイ</LabelLine>
                <LabelLine>デア</LabelLine>
              </BigButton>
            </Columns>
          </Group>
        </GroupRow>
      </Ribbon>

      <RibbonShade />

      <FormulaRow>
        <NameBox>B2</NameBox>
        <Slot $w={45}><Dots /></Slot>
        <FxBox>
          <Ico w={18} h={18} c="#bbb" sw={3}>
            <path d="M2 1l14 16M16 1L2 17" />
          </Ico>
          <Ico w={19} h={18} c="#bbb" sw={3.5}>
            <path d="M2 9l6 7L17 2" />
          </Ico>
          <FxText>fx</FxText>
        </FxBox>
        <FormulaInput>
          品名
          <Chev />
        </FormulaInput>
      </FormulaRow>

      <Main>
        <SidePanel>
          <SlideNum>1</SlideNum>
          <Thumb>
            <MiniTable>
              <MiniCell>品名</MiniCell>
              <MiniCell>価格</MiniCell>
              <MiniCell>個数</MiniCell>
              <MiniCell>りんご</MiniCell>
              <MiniCell $num>100</MiniCell>
              <MiniCell $num>1</MiniCell>
              <MiniCell>バナナ</MiniCell>
              <MiniCell $num>200</MiniCell>
              <MiniCell $num>3</MiniCell>
              <MiniCell>みかん</MiniCell>
              <MiniCell $num>130</MiniCell>
              <MiniCell $num>2</MiniCell>
            </MiniTable>
          </Thumb>
        </SidePanel>
        <SlideArea>
          <Slide>
            <Embedded>
              <Handle $x="3px" $y="3px" />
              <Handle $x="50%" $y="3px" />
              <Handle $x="calc(100% - 3px)" $y="3px" />
              <Handle $x="3px" $y="50%" />
              <Handle $x="calc(100% - 3px)" $y="50%" />
              <Handle $x="3px" $y="calc(100% - 3px)" />
              <Handle $x="50%" $y="calc(100% - 3px)" />
              <Handle $x="calc(100% - 3px)" $y="calc(100% - 3px)" />
              <Sheet>
                <SheetGrid>
                  <Corner />
                  <ColHead>B</ColHead>
                  <ColHead>C</ColHead>
                  <ColHead>D</ColHead>
                  <VScroll>
                    <ScrollThumb />
                    <ScrollBtn $w={24} $h={24} $auto>
                      <Ico w={10} h={7} c="#777">
                        <path d="M0 0h10L5 7z" fill="#777" />
                      </Ico>
                    </ScrollBtn>
                  </VScroll>
                  <RowHead>2</RowHead>
                  <Cell $sel $left $top>品名</Cell>
                  <Cell $top>価格</Cell>
                  <Cell $top $last>個数</Cell>
                  <RowHead>3</RowHead>
                  <Cell $left>バナナ</Cell>
                  <Cell $num>200</Cell>
                  <Cell $num $last>3</Cell>
                  <RowHead>4</RowHead>
                  <Cell $left>みかん</Cell>
                  <Cell $num>130</Cell>
                  <Cell $num $last>2</Cell>
                  <RowHead>5</RowHead>
                  <Cell $left $end>りんご</Cell>
                  <Cell $num $end>100</Cell>
                  <Cell $num $last $end>1</Cell>
                </SheetGrid>
                <SheetTabs>
                  <Slot $w={32}>
                    <Ico w={6} h={12} c="#c0c0c0"><path d="M6 0v12L0 6z" fill="#c0c0c0" /></Ico>
                  </Slot>
                  <Slot $w={30}>
                    <Ico w={6} h={12} c="#c0c0c0"><path d="M0 0v12l6-6z" fill="#c0c0c0" /></Ico>
                  </Slot>
                  <Slot $w={33} />
                  <SheetTab>Sheet1</SheetTab>
                  <Slot $w={92}><PlusCircle>+</PlusCircle></Slot>
                  <Slot $w={283} />
                  <Slot $w={16}><Dots /></Slot>
                  <HScroll>
                    <ScrollBtn $w={25} $h={26}>
                      <Ico w={6} h={12} c="#666"><path d="M6 0v12L0 6z" fill="#666" /></Ico>
                    </ScrollBtn>
                    <HTrack><HThumb /></HTrack>
                    <ScrollBtn $w={24} $h={26}>
                      <Ico w={6} h={12} c="#666"><path d="M0 0v12l6-6z" fill="#666" /></Ico>
                    </ScrollBtn>
                  </HScroll>
                </SheetTabs>
              </Sheet>
            </Embedded>
          </Slide>
        </SlideArea>
      </Main>

      <StatusBar>
        <StatusText $w={92} $ls={0.4}>スライド&nbsp;1/1</StatusText>
        <Slot $w={22} $ml={25}>
          <Ico w={22} h={22} c="#555">
            <path d="M11 3C8 1 4 1 1 2v15c3-1 6-1 8 0M11 3c3-2 7-2 10-1v9M11 3v8M12 15l3 4 6-7" />
          </Ico>
        </Slot>
        <StatusText $w={60} $ml={27}>日本語</StatusText>
        <StatusRight>
          <Ico w={22} h={20} c="#555">
            <path d="M0 11h22M0 15h22M0 19h12M8 6l3-4 3 4" />
          </Ico>
          <StatusText $w={39} $ml={5}>ノート</StatusText>
          <Slot $w={29} />
          <ViewBtn $w={60} $on>
            <Ico w={22} h={24} c="#444">
              <rect x="1" y="1" width="20" height="22" />
              <path d="M5 1v22M5 18h16" />
              <rect x="8" y="6" width="10" height="6" />
            </Ico>
          </ViewBtn>
          <ViewBtn $w={60}>
            <Ico w={22} h={22} c="#555">
              <path d="M1 1h8v8H1zM13 1h8v8h-8zM1 13h8v8H1zM13 13h8v8h-8z" />
            </Ico>
          </ViewBtn>
          <ViewBtn $w={59}>
            <Ico w={22} h={26} c="#555">
              <path d="M11 4C8 2 4 1 1 2v21c3-1 7 0 10 1 3-1 7-2 10-1V2c-3-1-7 0-10 2zM11 4v20M4 8h4M4 12h4M4 16h4M14 8h4M14 12h4M14 16h4" />
            </Ico>
          </ViewBtn>
          <ViewBtn $w={61}>
            <Ico w={20} h={26} c="#555">
              <path d="M0 1h20M2 1v15h16V1M10 16v8M5 24h10M7 7h6" />
            </Ico>
          </ViewBtn>
          <Slot $w={31}>
            <Ico w={12} h={2} c="#555"><path d="M0 1h12" /></Ico>
          </Slot>
          <ZoomSlider>
            <ZoomKnob />
            <ZoomTick />
          </ZoomSlider>
          <Slot $w={30}>
            <Ico w={12} h={12} c="#555"><path d="M0 6h12M6 0v12" /></Ico>
          </Slot>
          <StatusText $w={58} $ml={12} $fs={19}>72%</StatusText>
          <Ico w={24} h={24} c="#555">
            <rect x="7" y="6" width="10" height="12" />
            <path d="M3 9l-2 3 2 3M21 9l2 3-2 3M9 3l3-2 3 2M9 21l3 2 3-2" />
          </Ico>
        </StatusRight>
      </StatusBar>

      <Collapse width="16" height="10" viewBox="0 0 16 10" fill="none" stroke="#444" strokeWidth="1.6">
        <path d="M2 8l6-6 6 6" />
      </Collapse>

      <Menu>
        <MenuItem>
          <SortAZIcon />
          <span>昇順(<u>S</u>)</span>
        </MenuItem>
        <MenuItem>
          <SortAZIcon rev />
          <span>降順(<u>O</u>)</span>
        </MenuItem>
        <MenuItem>
          <Ico w={25} h={24} c="#555" sw={1.6}>
            <rect x="1" y="1" width="23" height="22" />
            <path d="M1 5h23" strokeWidth="3" />
            <path d="M8 9v10M5 15l3 4 3-4" stroke={BLUE} />
            <path d="M16 19V9M13 13l3-4 3 4" stroke="#333" />
          </Ico>
          <span>ユーザー設定の並べ替え(<u>U</u>)...</span>
        </MenuItem>
        <MenuSep />
        <MenuItem>
          <FunnelIcon />
          <span>フィルター(<u>F</u>)</span>
        </MenuItem>
        <MenuItem $off>
          <FunnelIcon c="#bbb">
            <path d="M16 16l8 9M24 16l-8 9" />
          </FunnelIcon>
          <span>クリア(<u>C</u>)</span>
        </MenuItem>
        <MenuItem $off>
          <FunnelIcon c="#bbb">
            <path d="M15 20a5 5 0 0 1 9-2M24 20a5 5 0 0 1-9 2" />
          </FunnelIcon>
          <span>再適用(<u>Y</u>)</span>
        </MenuItem>
        <MenuMark />
      </Menu>

      <StepNumber $x={92} $y={124}>1</StepNumber>
      <StepNumber $x={1535} $y={140}>2</StepNumber>
      <StepNumber $x={1524} $y={289}>3</StepNumber>
    </Window>
  </>
);

export default App;
